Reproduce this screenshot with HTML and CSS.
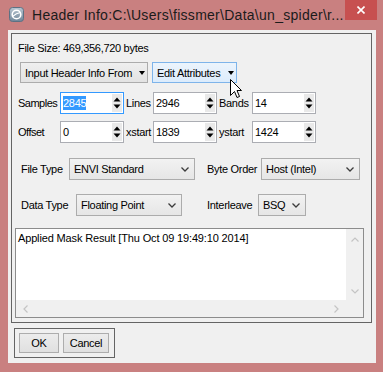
FILE: index.html
```html
<!DOCTYPE html>
<html>
<head>
<meta charset="utf-8">
<link rel="stylesheet" href="styles.css">
</head>
<body>
<div class="window">
  <div class="titlebar">
    <svg class="appicon" width="15" height="15" viewBox="0 0 15 15">
      <defs>
        <linearGradient id="ig" x1="0" y1="0" x2="0" y2="1">
          <stop offset="0" stop-color="#b9c7d2"/>
          <stop offset="1" stop-color="#6f8598"/>
        </linearGradient>
      </defs>
      <rect x="0.5" y="0.5" width="14" height="14" rx="3" fill="url(#ig)" stroke="#5d7183"/>
      <circle cx="7.5" cy="7.5" r="4.3" fill="none" stroke="#ffffff" stroke-width="1.6"/>
      <path d="M3.5 9.5 Q7.5 6 11.5 5.5" fill="none" stroke="#ffffff" stroke-width="1.2"/>
    </svg>
    <span class="title">Header Info:C:\Users\fissmer\Data\un_spider\r...</span>
    <div class="close">
      <svg width="8" height="8" viewBox="0 0 8 8"><path d="M0.5 0.5 L7.5 7.5 M7.5 0.5 L0.5 7.5" stroke="#fff" stroke-width="1.6"/></svg>
    </div>
  </div>
  <div class="client">
    <div class="group main">
      <div class="filesize">File Size: 469,356,720 bytes</div>
      <div class="btnrow">
        <div class="btn menu wide">Input Header Info From<span class="tri"></span></div>
        <div class="btn menu hover narrow">Edit Attributes<span class="tri"></span></div>
      </div>
      <div class="spinrow first">
        <span class="lbl">Samples</span>
        <div class="spin focus"><span class="val"><span class="sel">2845</span></span><span class="arrows"><svg width="10" height="18" viewBox="0 0 10 18"><path d="M1.5 7.5 L5 3.5 L8.5 7.5 Z M1.5 10.5 L5 14.5 L8.5 10.5 Z" fill="#000"/></svg></span></div>
        <span class="lbl pad">Lines</span>
        <div class="spin"><span class="val">2946</span><span class="arrows"><svg width="10" height="18" viewBox="0 0 10 18"><path d="M1.5 7.5 L5 3.5 L8.5 7.5 Z M1.5 10.5 L5 14.5 L8.5 10.5 Z" fill="#000"/></svg></span></div>
        <span class="lbl pad">Bands</span>
        <div class="spin"><span class="val">14</span><span class="arrows"><svg width="10" height="18" viewBox="0 0 10 18"><path d="M1.5 7.5 L5 3.5 L8.5 7.5 Z M1.5 10.5 L5 14.5 L8.5 10.5 Z" fill="#000"/></svg></span></div>
      </div>
      <div class="spinrow second">
        <span class="lbl">Offset</span>
        <div class="spin"><span class="val">0</span><span class="arrows"><svg width="10" height="18" viewBox="0 0 10 18"><path d="M1.5 7.5 L5 3.5 L8.5 7.5 Z M1.5 10.5 L5 14.5 L8.5 10.5 Z" fill="#000"/></svg></span></div>
        <span class="lbl pad">xstart</span>
        <div class="spin"><span class="val">1839</span><span class="arrows"><svg width="10" height="18" viewBox="0 0 10 18"><path d="M1.5 7.5 L5 3.5 L8.5 7.5 Z M1.5 10.5 L5 14.5 L8.5 10.5 Z" fill="#000"/></svg></span></div>
        <span class="lbl pad">ystart</span>
        <div class="spin"><span class="val">1424</span><span class="arrows"><svg width="10" height="18" viewBox="0 0 10 18"><path d="M1.5 7.5 L5 3.5 L8.5 7.5 Z M1.5 10.5 L5 14.5 L8.5 10.5 Z" fill="#000"/></svg></span></div>
      </div>
      <div class="selrow r1">
        <span class="lbl l1">File Type</span>
        <div class="combo c1">ENVI Standard<svg class="chev" width="8" height="5" viewBox="0 0 8 5"><path d="M0.5 0.5 L4 4 L7.5 0.5" fill="none" stroke="#3c3c3c" stroke-width="1.3"/></svg></div>
        <span class="lbl l2">Byte Order</span>
        <div class="combo c2">Host (Intel)<svg class="chev" width="8" height="5" viewBox="0 0 8 5"><path d="M0.5 0.5 L4 4 L7.5 0.5" fill="none" stroke="#3c3c3c" stroke-width="1.3"/></svg></div>
      </div>
      <div class="selrow r2">
        <span class="lbl l3">Data Type</span>
        <div class="combo c3">Floating Point<svg class="chev" width="8" height="5" viewBox="0 0 8 5"><path d="M0.5 0.5 L4 4 L7.5 0.5" fill="none" stroke="#3c3c3c" stroke-width="1.3"/></svg></div>
        <span class="lbl l4">Interleave</span>
        <div class="combo c4">BSQ<svg class="chev" width="8" height="5" viewBox="0 0 8 5"><path d="M0.5 0.5 L4 4 L7.5 0.5" fill="none" stroke="#3c3c3c" stroke-width="1.3"/></svg></div>
      </div>
      <div class="textbox">
        <div class="text">Applied Mask Result [Thu Oct 09 19:49:10 2014]</div>
        <div class="vscroll">
          <svg width="8" height="5" viewBox="0 0 8 5"><path d="M0.5 4.5 L4 1 L7.5 4.5" fill="none" stroke="#c4c4c4" stroke-width="1.2"/></svg>
          <svg width="8" height="5" viewBox="0 0 8 5"><path d="M0.5 0.5 L4 4 L7.5 0.5" fill="none" stroke="#c4c4c4" stroke-width="1.2"/></svg>
        </div>
        <div class="hscroll">
          <svg width="5" height="8" viewBox="0 0 5 8"><path d="M4.5 0.5 L1 4 L4.5 7.5" fill="none" stroke="#c4c4c4" stroke-width="1.2"/></svg>
          <svg width="5" height="8" viewBox="0 0 5 8"><path d="M0.5 0.5 L4 4 L0.5 7.5" fill="none" stroke="#c4c4c4" stroke-width="1.2"/></svg>
        </div>
        <div class="corner"></div>
      </div>
    </div>
    <div class="group buttons">
      <div class="btn ok">OK</div>
      <div class="btn cancel">Cancel</div>
    </div>
  </div>
  <svg class="cursor" width="13" height="20" viewBox="0 0 13 20">
    <path d="M0.5 0.5 L0.5 16.5 L4.5 12.5 L7 18.5 L9.5 17.5 L7 11.5 L11.5 11.5 Z" fill="#fff" stroke="#000" stroke-width="1" stroke-linejoin="miter"/>
  </svg>
</div>
</body>
</html>
```

FILE: styles.css
```css
* { box-sizing: border-box; }
html, body { margin: 0; padding: 0; }
body {
  font-family: "Liberation Sans", Arial, sans-serif;
  font-size: 11px;
  letter-spacing: -0.3px;
  color: #000;
}
.window {
  position: relative;
  width: 383px;
  height: 372px;
  background: #c98080;
  padding: 0 7px 9px 8px;
  display: flex;
  flex-direction: column;
}
.titlebar {
  height: 30px;
  display: flex;
  align-items: flex-start;
}
.appicon { margin: 7px 0 0 1px; }
.title {
  margin: 6px 0 0 8px;
  font-size: 14px;
  letter-spacing: 0.27px;
  line-height: 18px;
  color: #1b1b1b;
  white-space: nowrap;
}
.close {
  margin-left: auto;
  margin-right: -1px;
  width: 32px;
  height: 20px;
  background: #c75050;
  display: flex;
  align-items: center;
  justify-content: center;
}
.client {
  flex: 1;
  background: #f0f0f0;
  padding: 3px 4px 0 3px;
}
.group { border: 1px solid #646464; }
.main {
  height: 290px;
  display: flex;
  flex-direction: column;
}
.filesize {
  margin: 7px 0 0 6px;
  line-height: 14px;
}
.btnrow {
  margin: 7px 0 0 8px;
  display: flex;
  gap: 4px;
  height: 21px;
}
.btn {
  height: 21px;
  border: 1px solid #acacac;
  background: linear-gradient(#efefef, #e3e3e3);
  display: flex;
  align-items: center;
  line-height: 14px;
}
.menu { padding-left: 4px; }
.wide { width: 128px; }
.narrow { width: 85px; }
.hover {
  border-color: #7eb4ea;
  background: linear-gradient(#ecf4fc, #dcecfc);
}
.tri {
  margin-left: auto;
  margin-right: 2px;
  width: 0;
  height: 0;
  border-left: 3.5px solid transparent;
  border-right: 3.5px solid transparent;
  border-top: 4px solid #000;
}
.spinrow {
  display: grid;
  grid-template-columns: 42px 64px 29px 64px 35px 64px;
  height: 22px;
  margin-left: 6px;
  align-items: center;
}
.spinrow.first { margin-top: 9px; }
.spinrow.second { margin-top: 7px; }
.lbl { line-height: 14px; white-space: nowrap; }
.spinrow .lbl:first-child { letter-spacing: -0.5px; }
.lbl.pad { padding-left: 2px; }
.spin {
  height: 22px;
  border: 1px solid #abadb3;
  background: #fff;
  display: flex;
  align-items: center;
  padding: 0 1px 0 1px;
}
.spin.focus { border-color: #3399ff; }
.val { flex: 1; line-height: 14px; padding-left: 1px; }
.sel { background: #3399ff; color: #fff; padding: 1px 0; }
.arrows {
  width: 10px;
  height: 18px;
  background: #e9e9e9;
  display: flex;
}
.selrow {
  display: flex;
  align-items: center;
  height: 22px;
  margin-left: 9px;
}
.selrow.r1 { margin-top: 15px; }
.selrow.r2 { margin-top: 14px; }
.l1 { width: 48px; }
.l2 { width: 54px; margin-left: 12px; }
.l3 { width: 55px; }
.l4 { width: 51px; margin-left: 25px; }
.combo {
  height: 22px;
  border: 1px solid #acacac;
  background: linear-gradient(#f2f2f2, #e6e6e6);
  display: flex;
  align-items: center;
  padding: 0 5px 0 4px;
  line-height: 14px;
  white-space: nowrap;
}
.chev { margin-left: auto; }
.c1 { width: 126px; }
.c2 { width: 99px; }
.c3 { width: 106px; }
.c4 { width: 48px; }
.textbox {
  margin: 12px 0 0 3px;
  width: 349px;
  height: 90px;
  border: 1px solid #8c8c8c;
  display: grid;
  grid-template-columns: 1fr 17px;
  grid-template-rows: 1fr 17px;
}
.text {
  background: #fff;
  padding: 2px 0 0 2px;
  line-height: 14px;
  letter-spacing: -0.15px;
  white-space: nowrap;
}
.vscroll {
  background: #f0f0f0;
  display: flex;
  flex-direction: column;
  align-items: center;
  justify-content: space-between;
  padding: 8px 0 6px;
}
.hscroll {
  background: #f0f0f0;
  display: flex;
  align-items: center;
  justify-content: space-between;
  padding: 0 7px 0 7px;
}
.corner { background: #f0f0f0; }
.buttons {
  margin: 5px 0 0 3px;
  width: 101px;
  height: 30px;
  display: flex;
  gap: 4px;
  padding: 4px 0 0 4px;
}
.ok, .cancel {
  height: 20px;
  justify-content: center;
  background: linear-gradient(#ececec, #e0e0e0);
  border-color: #adadad;
}
.ok { width: 40px; }
.cancel { width: 46px; }
.cursor {
  position: absolute;
  left: 230px;
  top: 79px;
}
```
